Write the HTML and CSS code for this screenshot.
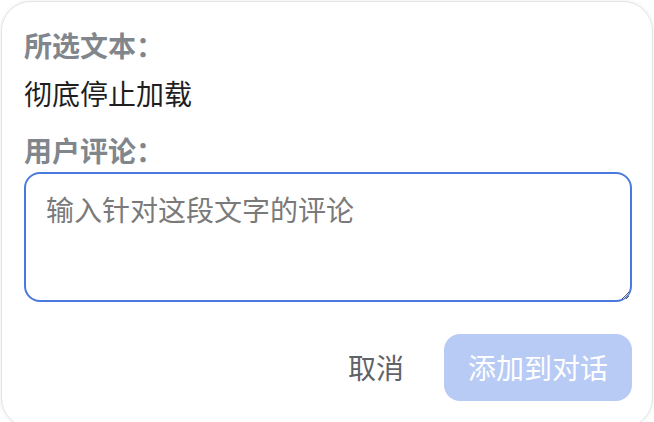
FILE: index.html
```html
<!DOCTYPE html>
<html lang="zh-CN">
<head>
<meta charset="utf-8">
<link rel="stylesheet" href="styles.css">
</head>
<body>
<div class="card">
  <div class="label">所选文本：</div>
  <div class="selected">彻底停止加载</div>
  <div class="label label-comment">用户评论：</div>
  <textarea class="comment" placeholder="输入针对这段文字的评论"></textarea>
  <div class="actions">
    <button class="btn btn-cancel">取消</button>
    <button class="btn btn-add" disabled>添加到对话</button>
  </div>
</div>
</body>
</html>
```
FILE: styles.css
```css
html, body {
  margin: 0;
  padding: 0;
  background: #ffffff;
  overflow: hidden;
}
body {
  font-family: "Noto Sans CJK SC", "Noto Sans", sans-serif;
  font-size: 28px;
  line-height: 40px;
}
.card {
  box-sizing: border-box;
  width: 652px;
  margin: 1px 0 0 1px;
  padding: 23px 20px 26px 22px;
  border: 1px solid #e4e4e4;
  border-radius: 30px;
  box-shadow: 0 0 4px rgba(0, 0, 0, 0.08);
  background: #ffffff;
}
.label {
  font-weight: 700;
  color: #80868b;
}
.selected {
  color: #1f1f1f;
  margin-top: 8px;
}
.label-comment {
  margin-top: 17px;
  margin-bottom: 2px;
}
.comment {
  display: block;
  box-sizing: border-box;
  width: 100%;
  height: 130px;
  margin: 0;
  padding: 15px 20px;
  border: 2px solid #4a7ade;
  border-radius: 16px;
  font-family: inherit;
  font-size: 28px;
  line-height: 40px;
  color: #1f1f1f;
  outline: none;
  resize: vertical;
}
.comment::placeholder {
  color: #7a7a7a;
}
.actions {
  display: flex;
  justify-content: flex-end;
  gap: 16px;
  margin-top: 32px;
}
.btn {
  font-family: inherit;
  font-size: 28px;
  line-height: 40px;
  padding: 13px 24px 14px;
  border: none;
  border-radius: 16px;
  background: transparent;
}
.btn-cancel {
  color: #5f6368;
}
.btn-add {
  background: #b8cbf5;
  color: #ffffff;
}
```
